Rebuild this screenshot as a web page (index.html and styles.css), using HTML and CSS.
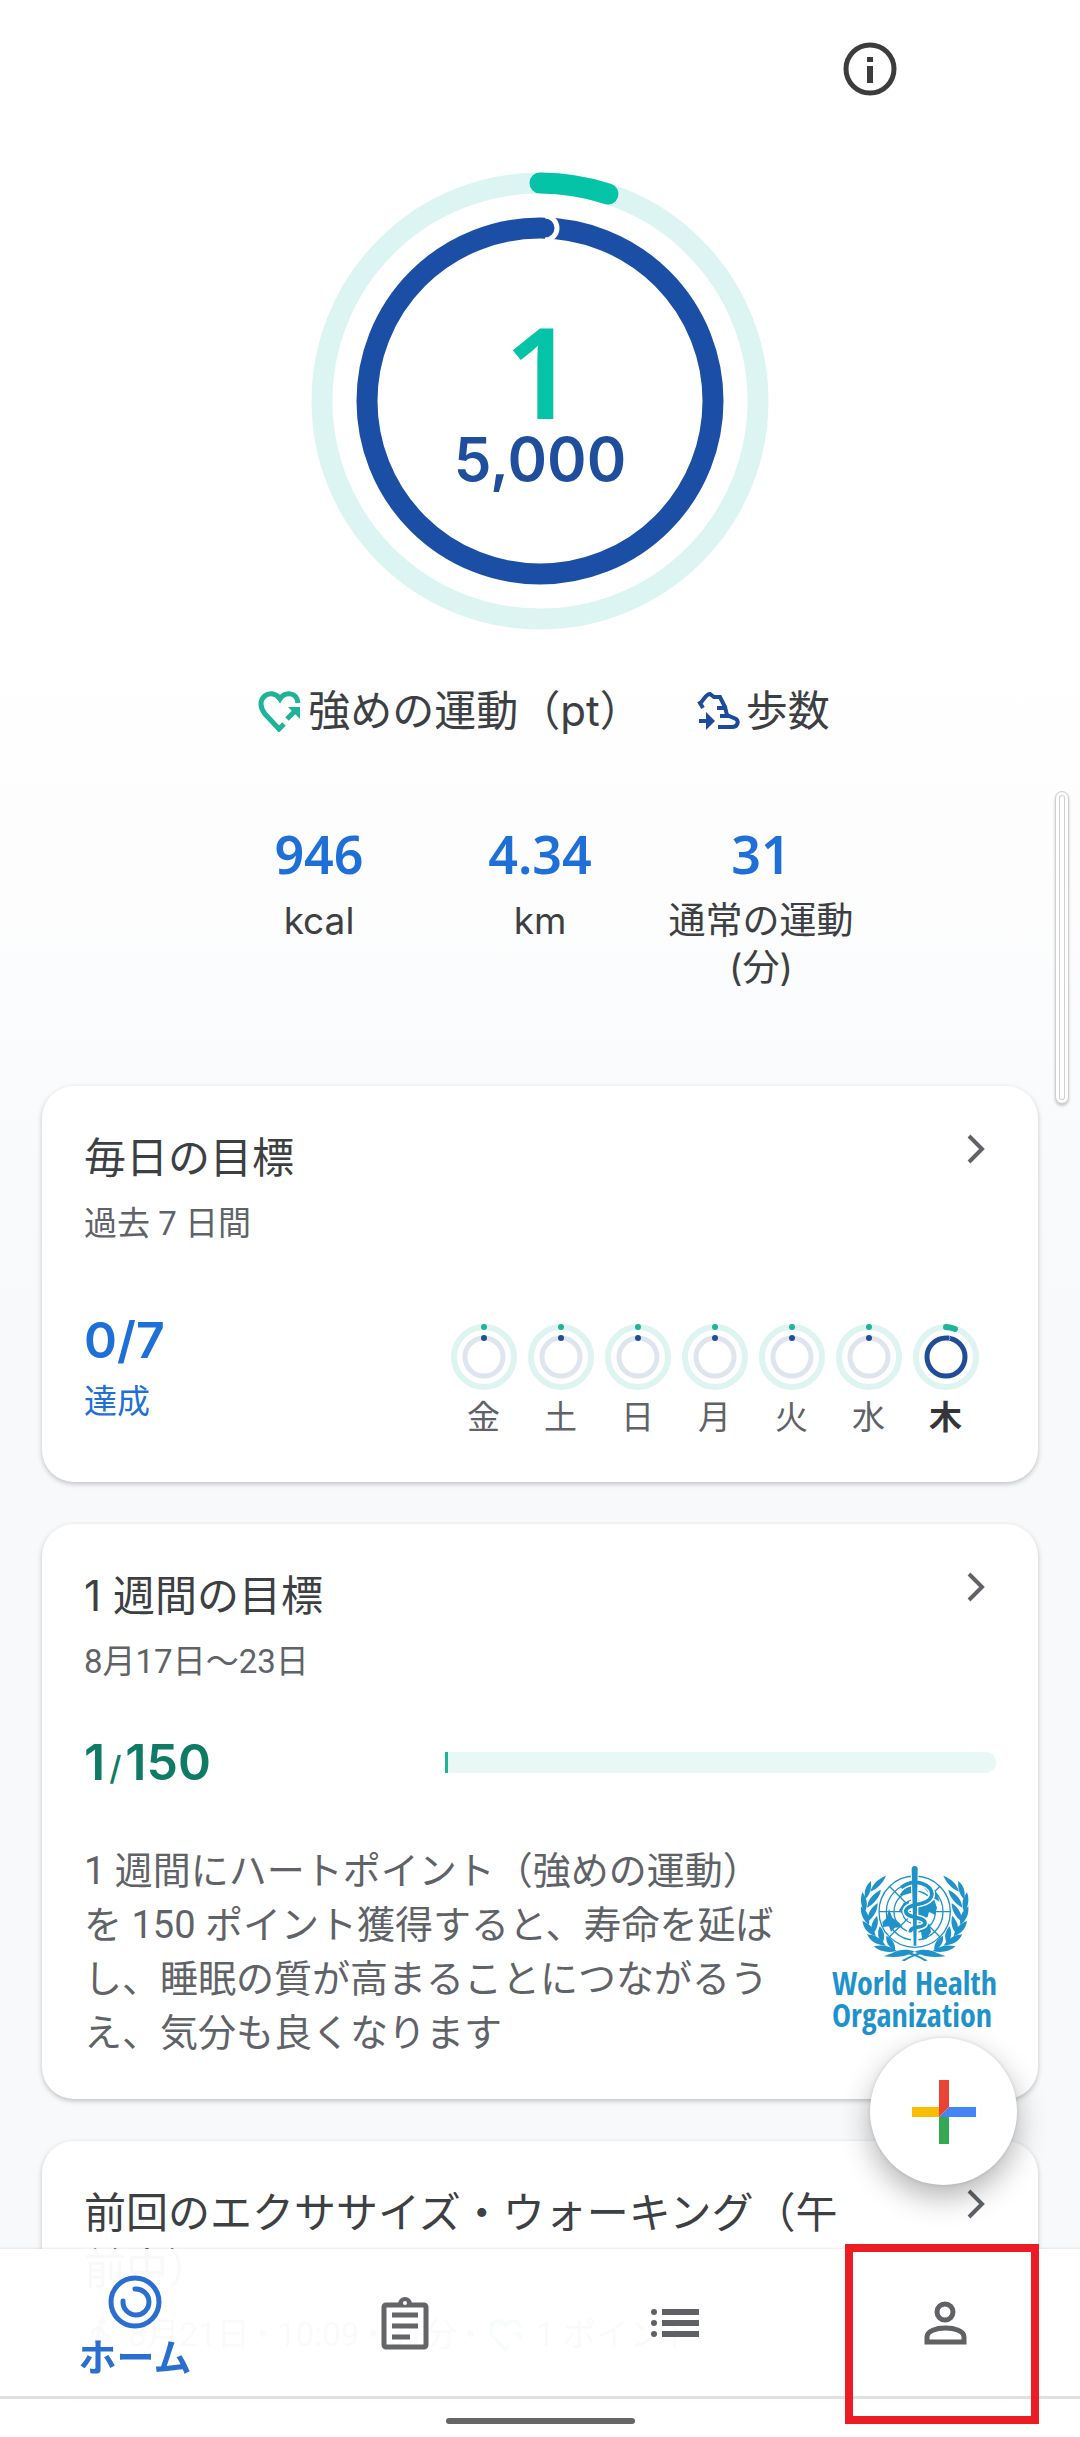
FILE: index.html
```html
<!DOCTYPE html>
<html lang="ja">
<head>
    <meta charset="UTF-8">
    <meta name="viewport" content="width=device-width, initial-scale=1.0">
    <title>ホーム</title>
    <link rel="stylesheet" href="styles.css">
</head>
<body>
    <!-- Shared shapes -->
    <svg class="defs" aria-hidden="true">
        <symbol id="chevron" viewBox="0 0 20 30">
            <path d="M3 2l13 13L3 28" fill="none" stroke="#5f6368" stroke-width="4"/>
        </symbol>
        <symbol id="day-ring" viewBox="0 0 66 66">
            <circle cx="33" cy="33" r="30" fill="none" stroke="#def4f0" stroke-width="6"/>
            <circle cx="33" cy="33" r="19" fill="none" stroke="#dfe5ee" stroke-width="5"/>
            <circle cx="33" cy="3" r="3" fill="#1fb397"/>
            <circle cx="33" cy="14" r="3" fill="#1f4e96"/>
        </symbol>
    </svg>

    <header class="header">
        <button class="info-btn" aria-label="情報">
            <svg viewBox="0 0 54 54" width="54" height="54">
                <circle cx="27" cy="27" r="24" fill="none" stroke="#3c3c3e" stroke-width="5"/>
                <path d="M24 15h6v5h-6zM24 24h6v17h-6z" fill="#3c3c3e"/>
            </svg>
        </button>
    </header>

    <main>
        <!-- Today -->
        <section class="today">
            <div class="rings">
                <svg viewBox="0 0 458 458">
                    <circle cx="229" cy="229" r="218" fill="none" stroke="#dcf5f2" stroke-width="21"/>
                    <path d="M229 11A218 218 0 0 1 297 22" fill="none" stroke="#04c3a6" stroke-width="21" stroke-linecap="round"/>
                    <circle cx="229" cy="229" r="173" fill="none" stroke="#1a4fa5" stroke-width="21"/>
                    <path d="M234 44a12 12 0 0 1 0 24" fill="none" stroke="#fff" stroke-width="5"/>
                </svg>
                <div class="ring-values">
                    <span class="heart-value">1</span>
                    <span class="step-value">5,000</span>
                </div>
            </div>

            <div class="legend">
                <span class="legend-item">
                    <svg viewBox="0 0 44 42" width="44" height="42" fill="none" stroke="#1fb397" stroke-width="5">
                        <path d="M26 34l-5 5L7 24C-5 9 13-4 22 9C27 1 39 2 40 13"/>
                        <path d="M29 29l9-9"/>
                        <path d="M30 17h12v12z" fill="#1fb397" stroke="none"/>
                    </svg>
                    強めの運動（pt）
                </span>
                <span class="legend-item">
                    <svg viewBox="0 0 44 42" width="44" height="42" fill="none" stroke="#1c4b9c" stroke-width="4">
                        <path d="M7 18l-3-5C8 11 9 4 14 4l4 3h6l5 10 2 8 9 4c3 2 2 8-4 8H22"/>
                        <path d="M21 18h9M24 26h9"/>
                        <path d="M3 31h8"/>
                        <path d="M10 22l9 9-9 9z" fill="#1c4b9c" stroke="none"/>
                    </svg>
                    歩数
                </span>
            </div>

            <dl class="stats">
                <div class="stat">
                    <dd>946</dd>
                    <dt>kcal</dt>
                </div>
                <div class="stat">
                    <dd>4.34</dd>
                    <dt>km</dt>
                </div>
                <div class="stat">
                    <dd>31</dd>
                    <dt>通常の運動<br>(分)</dt>
                </div>
            </dl>
        </section>

        <!-- Daily goals -->
        <section class="card">
            <div class="card-head">
                <div>
                    <h2>毎日の目標</h2>
                    <p class="sub">過去 7 日間</p>
                </div>
                <a class="more" href="#" aria-label="毎日の目標"><svg width="20" height="30"><use href="#chevron"/></svg></a>
            </div>
            <div class="daily">
                <div class="daily-total">
                    <p class="value blue">0/7</p>
                    <p class="sub blue">達成</p>
                </div>
                <ul class="week">
                    <li><svg><use href="#day-ring"/></svg>金</li>
                    <li><svg><use href="#day-ring"/></svg>土</li>
                    <li><svg><use href="#day-ring"/></svg>日</li>
                    <li><svg><use href="#day-ring"/></svg>月</li>
                    <li><svg><use href="#day-ring"/></svg>火</li>
                    <li><svg><use href="#day-ring"/></svg>水</li>
                    <li class="current">
                        <svg viewBox="0 0 66 66">
                            <circle cx="33" cy="33" r="30" fill="none" stroke="#def4f0" stroke-width="6"/>
                            <path d="M33 3A30 30 0 0 1 42 5" fill="none" stroke="#1fb397" stroke-width="6" stroke-linecap="round"/>
                            <circle cx="33" cy="33" r="19" fill="none" stroke="#1f4e96" stroke-width="5"/>
                            <path d="M34 11a3 3 0 0 1 0 6" fill="none" stroke="#8fa6cb" stroke-width="1"/>
                        </svg>木
                    </li>
                </ul>
            </div>
        </section>

        <!-- Weekly goal -->
        <section class="card">
            <div class="card-head">
                <div>
                    <h2>1 週間の目標</h2>
                    <p class="sub">8月17日～23日</p>
                </div>
                <a class="more" href="#" aria-label="1 週間の目標"><svg width="20" height="30"><use href="#chevron"/></svg></a>
            </div>
            <div class="weekly">
                <p class="value green">1<small>/</small>150</p>
                <div class="bar" role="progressbar" aria-valuenow="1" aria-valuemin="0" aria-valuemax="150" aria-label="1 週間の目標">
                    <div class="bar-fill" style="width: 0.6%"></div>
                </div>
            </div>
            <div class="about">
                <p>1 週間にハートポイント（強めの運動）を 150 ポイント獲得すると、寿命を延ばし、睡眠の質が高まることにつながるうえ、気分も良くなります</p>
                <div class="who">
                    <svg viewBox="0 0 396 336" width="132" height="112">
                        <g fill="none" stroke="#1f93c9" stroke-width="4">
                            <circle cx="197" cy="170" r="107"/>
                            <circle cx="197" cy="170" r="85"/>
                            <circle cx="197" cy="170" r="62"/>
                            <circle cx="197" cy="170" r="36"/>
                            <path d="M90 170h214M121 94l152 152M273 94L121 246"/>
                        </g>
                        <g fill="#1f93c9">
                            <path d="M100 202l12-12 8-28 10 26 22 16 8 12-22 2-12 12-6-16-18 2z"/>
                            <path d="M150 122l20-26 22-10v26l-18 6zM212 84l28 4 22 24 10 28-24-14-14-18z"/>
                            <path d="M150 166l14-22 16-6v48l-18-6zM206 140l30 6 20-12 8 24-6 22-18-10-4 16-30 6z"/>
                            <path d="M208 208l20-8 14 8 4 22-14 22-12 2-4-24-10-10z"/>
                        </g>
                        <!-- Laurel, mirrored for the right side -->
                        <g id="laurel" fill="#1f93c9">
                            <path d="M111 62C86 72 70 88 64 110C84 102 102 84 111 62z"/>
                            <path d="M66 78C48 94 44 112 49 132C64 118 68 98 66 78z"/>
                            <path d="M96 104C72 116 57 132 54 158C74 146 92 128 96 104z"/>
                            <path d="M40 112C32 134 36 154 48 172C58 150 54 130 40 112z"/>
                            <path d="M86 144C66 158 54 176 56 200C74 186 86 168 86 144z"/>
                            <path d="M36 154C34 178 42 196 60 210C64 186 54 168 36 154z"/>
                            <path d="M84 182C70 198 62 216 70 238C86 222 90 202 84 182z"/>
                            <path d="M40 198C44 222 58 236 80 244C76 220 62 206 40 198z"/>
                            <path d="M92 214C84 234 86 250 100 266C110 246 106 228 92 214z"/>
                            <path d="M54 238C64 260 84 270 110 272C98 252 80 240 54 238z"/>
                            <path d="M112 242C110 262 118 276 138 286C140 266 130 252 112 242z"/>
                            <path d="M74 274C92 290 116 294 144 288C124 274 102 268 74 274z"/>
                            <path d="M104 304C134 308 166 308 197 290C176 280 144 284 130 294z"/>
                            <path d="M158 316C174 308 190 298 222 288L226 294C204 300 182 308 166 319z"/>
                        </g>
                        <use href="#laurel" transform="matrix(-1 0 0 1 394 0)"/>
                        <path d="M197 36v236" stroke="#fff" stroke-width="22"/>
                        <path d="M156 98C196 66 254 88 248 122C240 154 176 142 170 168C172 194 232 182 228 206C222 224 184 208 184 232" fill="none" stroke="#fff" stroke-width="20"/>
                        <path d="M188 42a9 9 0 0 1 18 0l-4 230h-8z" fill="#1f93c9"/>
                        <path d="M156 98C196 66 254 88 248 122C240 154 176 142 170 168C172 194 232 182 228 206C222 224 184 208 184 232" fill="none" stroke="#1f93c9" stroke-width="11"/>
                    </svg>
                    <span>World Health<br>Organization</span>
                </div>
            </div>
        </section>

        <!-- Last exercise -->
        <section class="card last">
            <div class="card-head">
                <div>
                    <h2>前回のエクササイズ・ウォーキング（午前中）</h2>
                    <p class="sub last-sub">
                        <svg viewBox="0 0 32 40" width="32" height="36" fill="none" stroke="#5f6368" stroke-width="4">
                            <circle cx="18" cy="5" r="2"/>
                            <path d="M7 20l2-6 7-3 4 8 7 2M15 13l-2 12 6 5v9M12 25L7 39"/>
                        </svg>
                        8月21日 • 10:09 • 31分 •
                        <svg viewBox="0 0 44 42" width="36" height="34" fill="none" stroke="#1fb397" stroke-width="5">
                            <path d="M26 34l-5 5L7 24C-5 9 13-4 22 9C27 1 39 2 40 13"/>
                            <path d="M30 17h12v12z" fill="#1fb397" stroke="none"/>
                        </svg>
                        1 ポイント
                    </p>
                </div>
                <a class="more" href="#" aria-label="前回のエクササイズ"><svg width="20" height="30"><use href="#chevron"/></svg></a>
            </div>
        </section>
    </main>

    <div class="scrollbar"></div>

    <button class="fab" aria-label="追加">
        <svg viewBox="0 0 64 64" width="64" height="64">
            <path d="M0 27h27v10H0z" fill="#fbbc04"/>
            <path d="M27 37h10v27H27z" fill="#34a853"/>
            <path d="M37 27h27v10H27z" fill="#4285f4"/>
            <path d="M27 0h10v27L27 37z" fill="#ea4335"/>
        </svg>
    </button>

    <nav class="bottom">
        <div class="tabs">
            <a class="tab active" href="#">
                <svg viewBox="0 0 54 54" width="54" height="54" fill="none" stroke="#2a6fcf" stroke-width="5">
                    <circle cx="27" cy="27" r="24"/>
                    <path d="M27 14a13 13 0 1 1-12 12" stroke-linecap="round"/>
                </svg>
                ホーム
            </a>
            <a class="tab" href="#" aria-label="記録">
                <svg viewBox="0 0 48 54" width="48" height="54">
                    <rect x="3" y="9" width="42" height="42" rx="2" fill="none" stroke="#646568" stroke-width="5"/>
                    <path d="M17 8a7 7 0 0 1 14 0z" fill="#646568"/>
                    <circle cx="24" cy="7" r="2" fill="#fff"/>
                    <path d="M11 19h26M11 30h26M11 41h18" stroke="#646568" stroke-width="5"/>
                </svg>
            </a>
            <a class="tab" href="#" aria-label="閲覧">
                <svg viewBox="0 0 48 28" width="48" height="28">
                    <path d="M11 3h37M11 14h37M11 25h37" stroke="#5f6164" stroke-width="6"/>
                    <circle cx="3" cy="3" r="3" fill="#5f6164"/>
                    <circle cx="3" cy="14" r="3" fill="#5f6164"/>
                    <circle cx="3" cy="25" r="3" fill="#5f6164"/>
                </svg>
            </a>
            <a class="tab" href="#" aria-label="プロフィール">
                <svg viewBox="0 0 43 44" width="43" height="44" fill="none" stroke="#5f6164" stroke-width="5">
                    <circle cx="21" cy="11" r="8"/>
                    <path d="M3 41V36C3 24 40 24 40 36v5z"/>
                </svg>
                <span class="highlight"></span>
            </a>
        </div>
        <div class="handle"></div>
    </nav>
</body>
</html>
```
FILE: styles.css
```css
* {
    margin: 0;
    padding: 0;
    box-sizing: border-box;
}

body {
    min-height: 100vh;
    background: linear-gradient(#ffffff 0, #ffffff 620px, #f8f9fb 1300px);
    color: #3c4043;
    font-family: Roboto, 'Noto Sans CJK JP', sans-serif;
}

svg {
    display: block;
    flex: none;
}

a {
    color: inherit;
    text-decoration: none;
}

button {
    border: none;
    background: none;
    cursor: pointer;
}

.defs {
    position: absolute;
    width: 0;
    height: 0;
}

.header {
    display: flex;
    justify-content: flex-end;
    padding: 42px 183px 76px 0;
}

.info-btn {
    width: 54px;
    height: 54px;
}

/* Today */
.today {
    display: flex;
    flex-direction: column;
    align-items: center;
    margin-bottom: 95px;
}

.rings {
    display: grid;
    width: 458px;
}

.rings > * {
    grid-area: 1 / 1;
}

.ring-values {
    display: flex;
    flex-direction: column;
    align-items: center;
    justify-content: center;
    padding-top: 16px;
    font-family: Inter, sans-serif;
    font-weight: 600;
}

.heart-value {
    color: #04c3a6;
    font-family: 'Noto Sans', sans-serif;
    font-size: 126px;
    line-height: 100px;
}

.step-value {
    color: #1f4e9c;
    font-size: 60px;
    line-height: 78px;
}

.legend {
    display: flex;
    gap: 54px;
    margin-top: 51px;
    padding-left: 8px;
    font-family: Inter, 'Noto Sans CJK JP', sans-serif;
    font-size: 42px;
    line-height: 60px;
}

.legend-item {
    display: flex;
    align-items: center;
    gap: 6px;
}

.stats {
    display: grid;
    grid-template-columns: repeat(3, 221px);
    margin-top: 83px;
    text-align: center;
}

.stat dd {
    color: #1f6fd8;
    font-family: 'Noto Sans', sans-serif;
    font-size: 52px;
    font-weight: 600;
    line-height: 60px;
}

.stat dt {
    margin-top: 13px;
    font-family: Inter, 'Noto Sans CJK JP', sans-serif;
    font-size: 37px;
    line-height: 47px;
}

/* Cards */
.card {
    margin: 0 42px 42px;
    padding: 44px 42px;
    border-radius: 32px;
    background: #fff;
    box-shadow: 0 2px 5px rgba(60, 64, 67, 0.3);
}

.card-head {
    display: flex;
    justify-content: space-between;
}

.card h2 {
    font-family: Inter, 'Noto Sans CJK JP', sans-serif;
    font-size: 42px;
    font-weight: 400;
    line-height: 56px;
}

.sub {
    margin-top: 18px;
    color: #5f6368;
    font-size: 33px;
    line-height: 40px;
}

.more {
    padding: 4px 10px;
}

.value {
    font-family: Inter, sans-serif;
    font-size: 50px;
    font-weight: 600;
    line-height: 60px;
}

.value small {
    margin: 0 4px;
    font-size: 33px;
    font-weight: 500;
    line-height: 30px;
}

.blue {
    color: #1f6fd8;
}

.green {
    color: #0f7b64;
}

.daily {
    display: flex;
    justify-content: space-between;
    margin-top: 66px;
}

.daily-total .sub {
    margin-top: 12px;
}

.week {
    display: flex;
    margin: 14px 12px 0 0;
    list-style: none;
    color: #5f6368;
    font-size: 33px;
    line-height: 40px;
}

.week li {
    width: 77px;
    text-align: center;
}

.week svg {
    width: 66px;
    height: 66px;
    margin: 0 auto 8px;
}

.week .current {
    color: #333538;
    font-weight: 700;
}

.weekly {
    display: flex;
    align-items: center;
    justify-content: space-between;
    height: 60px;
    margin-top: 50px;
}

.bar {
    width: 551px;
    height: 21px;
    border-radius: 0 10px 10px 0;
    background: #e7f8f5;
}

.bar-fill {
    height: 21px;
    background: #1fb397;
}

.about {
    display: flex;
    gap: 38px;
    margin: 52px 0 -5px;
}

.about p {
    flex: 1;
    color: #5f6368;
    font-size: 38px;
    line-height: 54px;
}

.who {
    display: flex;
    flex-direction: column;
    align-items: center;
    width: 163px;
    padding-top: 11px;
    color: #1f93c9;
    font-family: 'Liberation Sans Narrow', 'Open Sans Condensed', 'Roboto Condensed', 'Liberation Sans', sans-serif;
    font-size: 32px;
    font-weight: 700;
    line-height: 32px;
    white-space: nowrap;
}

.last {
    margin-bottom: 0;
}

.last h2 {
    max-width: 780px;
}

.last-sub {
    display: flex;
    align-items: center;
    gap: 12px;
}

/* Overlays */
.scrollbar {
    position: absolute;
    top: 791px;
    right: 11px;
    width: 14px;
    height: 313px;
    border: 1px solid #cfcfcf;
    border-radius: 7px;
    background: #fff;
    box-shadow: inset 0 0 0 3px #fff, inset 0 0 0 4px #cfcfcf, 0 2px 3px rgba(0, 0, 0, 0.2);
}

.fab {
    position: fixed;
    right: 63px;
    bottom: 252px;
    display: grid;
    place-items: center;
    width: 147px;
    height: 147px;
    border-radius: 50%;
    background: #fff;
    box-shadow: 0 12px 30px rgba(0, 0, 0, 0.3), 0 0 4px rgba(0, 0, 0, 0.12);
}

.bottom {
    position: fixed;
    right: 0;
    bottom: 0;
    left: 0;
    background: rgba(255, 255, 255, 0.97);
    box-shadow: 0 -1px 2px rgba(0, 0, 0, 0.08);
}

.tabs {
    display: grid;
    grid-template-columns: repeat(4, 1fr);
    height: 150px;
    border-bottom: 3px solid #e0e0e0;
}

.tab {
    position: relative;
    display: flex;
    flex-direction: column;
    align-items: center;
    justify-content: center;
    gap: 6px;
    font-size: 38px;
    line-height: 46px;
}

.tab.active {
    padding-top: 10px;
    color: #2a6fcf;
    font-weight: 700;
}

.highlight {
    position: absolute;
    top: -5px;
    right: 41px;
    width: 194px;
    height: 180px;
    border: 8px solid #ed1c24;
}

.handle {
    width: 189px;
    height: 6px;
    margin: 19px auto 13px;
    border-radius: 3px;
    background: #666;
}
```
